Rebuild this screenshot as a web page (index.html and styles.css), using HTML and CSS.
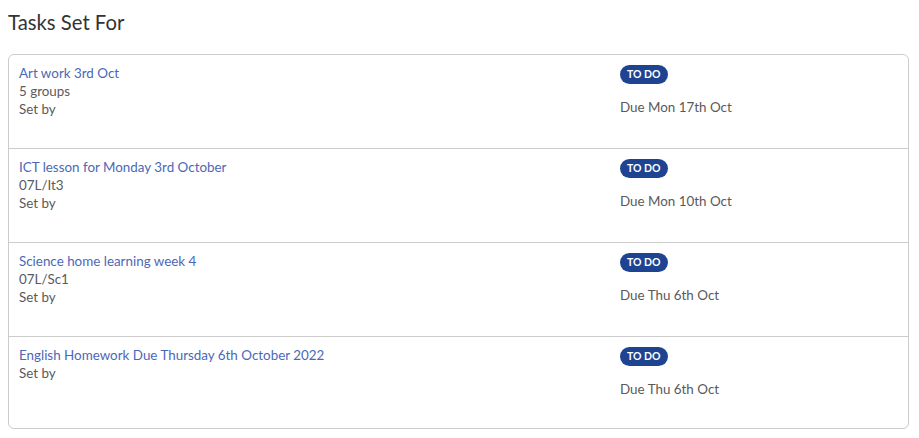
FILE: index.html
```html
<!DOCTYPE html>
<html>
<head>
<meta charset="utf-8">
<link rel="stylesheet" href="styles.css">
</head>
<body>
<h2 class="title">Tasks Set For</h2>
<div class="card">
  <div class="task">
    <div class="info">
      <a class="link" href="#">Art work 3rd Oct</a>
      <div>5 groups</div>
      <div>Set by</div>
    </div>
    <div class="status">
      <span class="badge">To do</span>
      <div class="due">Due Mon 17th Oct</div>
    </div>
  </div>
  <div class="task">
    <div class="info">
      <a class="link" href="#">ICT lesson for Monday 3rd October</a>
      <div>07L/It3</div>
      <div>Set by</div>
    </div>
    <div class="status">
      <span class="badge">To do</span>
      <div class="due">Due Mon 10th Oct</div>
    </div>
  </div>
  <div class="task">
    <div class="info">
      <a class="link" href="#">Science home learning week 4</a>
      <div>07L/Sc1</div>
      <div>Set by</div>
    </div>
    <div class="status">
      <span class="badge">To do</span>
      <div class="due">Due Thu 6th Oct</div>
    </div>
  </div>
  <div class="task">
    <div class="info">
      <a class="link" href="#">English Homework Due Thursday 6th October 2022</a>
      <div>Set by</div>
    </div>
    <div class="status">
      <span class="badge">To do</span>
      <div class="due">Due Thu 6th Oct</div>
    </div>
  </div>
</div>
</body>
</html>
```
FILE: styles.css
```css
body {
  margin: 0;
  padding: 0 10px 0 8px;
  font-family: "Lato", "Liberation Sans", sans-serif;
  font-size: 13.4px;
  line-height: 18px;
  color: #5a5a5a;
  background: #fff;
}
.title {
  margin: 0;
  padding: 9px 0 0 0;
  height: 54px;
  box-sizing: border-box;
  font-size: 20.3px;
  font-weight: 400;
  line-height: 26px;
  color: #333;
}
.card {
  border: 1px solid #ccc;
  border-radius: 6px;
  width: 901px;
  box-sizing: border-box;
}
.task {
  display: flex;
  height: 94px;
  box-sizing: border-box;
  border-bottom: 1px solid #ccc;
}
.task:last-child {
  border-bottom: none;
  height: 91px;
}
.info {
  width: 600px;
  padding: 9px 10px;
  box-sizing: border-box;
}
.link {
  display: block;
  color: #4b68b8;
  text-decoration: none;
}
.status {
  padding: 9px 11px;
}
.badge {
  display: inline-block;
  background: #1e4390;
  color: #fff;
  text-transform: uppercase;
  font-weight: 700;
  font-size: 10.5px;
  line-height: 19px;
  height: 19px;
  padding: 0 7px;
  border-radius: 10px;
}
.due {
  margin-top: 14px;
}
```
